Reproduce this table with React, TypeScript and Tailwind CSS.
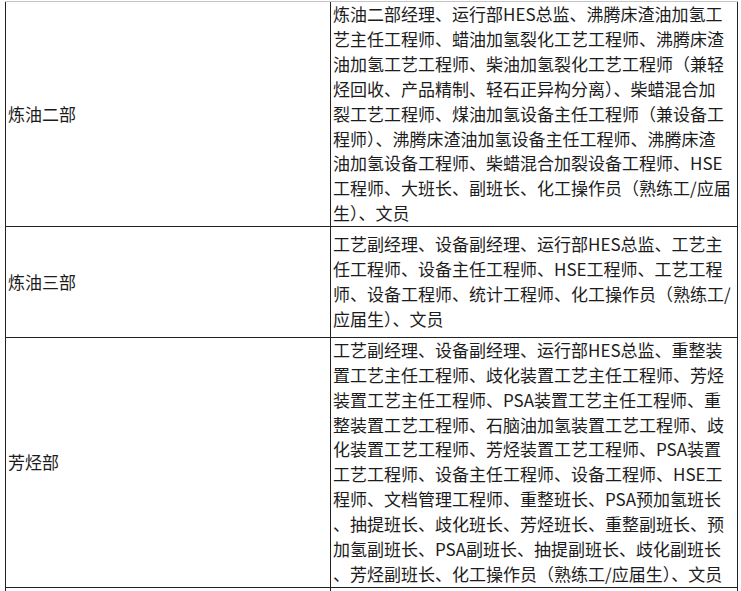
const rows: { dept: string; lines: string[]; pad?: string }[] = [
  {
    dept: "炼油二部",
    lines: [
      "炼油二部经理、运行部HES总监、沸腾床渣油加氢工",
      "艺主任工程师、蜡油加氢裂化工艺工程师、沸腾床渣",
      "油加氢工艺工程师、柴油加氢裂化工艺工程师（兼轻",
      "烃回收、产品精制、轻石正异构分离）、柴蜡混合加",
      "裂工艺工程师、煤油加氢设备主任工程师（兼设备工",
      "程师）、沸腾床渣油加氢设备主任工程师、沸腾床渣",
      "油加氢设备工程师、柴蜡混合加裂设备工程师、HSE",
      "工程师、大班长、副班长、化工操作员（熟练工/应届",
      "生）、文员",
    ],
  },
  {
    dept: "炼油三部",
    pad: "py-[5px]",
    lines: [
      "工艺副经理、设备副经理、运行部HES总监、工艺主",
      "任工程师、设备主任工程师、HSE工程师、工艺工程",
      "师、设备工程师、统计工程师、化工操作员（熟练工/",
      "应届生）、文员",
    ],
  },
  {
    dept: "芳烃部",
    lines: [
      "工艺副经理、设备副经理、运行部HES总监、重整装",
      "置工艺主任工程师、歧化装置工艺主任工程师、芳烃",
      "装置工艺主任工程师、PSA装置工艺主任工程师、重",
      "整装置工艺工程师、石脑油加氢装置工艺工程师、歧",
      "化装置工艺工程师、芳烃装置工艺工程师、PSA装置",
      "工艺工程师、设备主任工程师、设备工程师、HSE工",
      "程师、文档管理工程师、重整班长、PSA预加氢班长",
      "、抽提班长、歧化班长、芳烃班长、重整副班长、预",
      "加氢副班长、PSA副班长、抽提副班长、歧化副班长",
      "、芳烃副班长、化工操作员（熟练工/应届生）、文员",
    ],
  },
];

export default function App() {
  return (
    <div
      className="min-h-screen bg-white pt-px text-[17px] leading-[24.9px] text-[#1c1c1c]"
      style={{ fontFamily: '"Noto Sans CJK SC", "Microsoft YaHei", sans-serif' }}
    >
      <div className="ml-[5px] w-[733px] border-t border-[#c4c4c4]">
        {rows.map((row) => (
          <div key={row.dept} className="flex border-b border-[#222]">
            <div className="flex w-[325px] shrink-0 items-center border-l border-[#222] pl-[2px]">
              {row.dept}
            </div>
            <div className={`flex-1 overflow-hidden border-x border-[#222] pl-[2px] ${row.pad ?? ""}`}>
              {row.lines.map((line, i) => (
                <div key={i} className="whitespace-nowrap">
                  {line}
                </div>
              ))}
            </div>
          </div>
        ))}
        <div className="flex">
          <div className="h-[60px] w-[325px] shrink-0 border-l border-[#222]" />
          <div className="h-[60px] flex-1 border-x border-[#222]" />
        </div>
      </div>
    </div>
  );
}
